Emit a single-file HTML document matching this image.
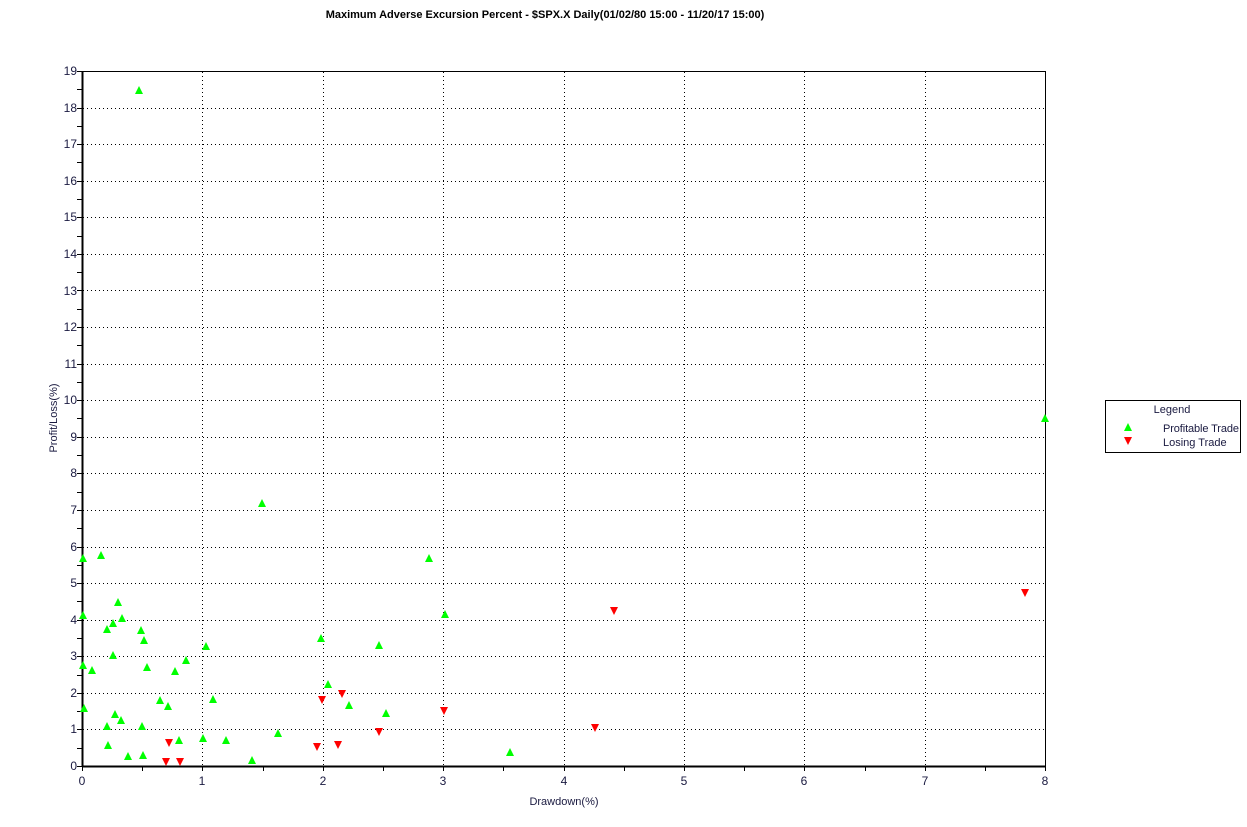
<!DOCTYPE html>
<html><head><meta charset="utf-8"><style>
html,body{margin:0;padding:0;background:#fff;width:1247px;height:827px;overflow:hidden}
svg text{font-family:"Liberation Sans",sans-serif;font-size:11px;fill:#1a1a40}
.n{font-size:12px}
</style></head><body>
<svg id="s" width="1247" height="827" xmlns="http://www.w3.org/2000/svg">
<text x="545" y="18" text-anchor="middle" style="font-weight:bold;font-size:11px;fill:#000">Maximum Adverse Excursion Percent - $SPX.X Daily(01/02/80 15:00 - 11/20/17 15:00)</text>
<g id="grid" stroke="#000" stroke-width="1" stroke-dasharray="1,3"></g>
<g id="ticks" stroke="#000" stroke-width="1"></g>
<rect x="82.5" y="71.5" width="963" height="695" fill="none" stroke="#000" stroke-width="1"/>
<line x1="82.5" y1="71" x2="82.5" y2="767" stroke="#000" stroke-width="2"/>
<line x1="82" y1="766.5" x2="1046" y2="766.5" stroke="#000" stroke-width="2"/>
<g text-anchor="end" class="n">
<text class="n" x="77" y="770">0</text><text class="n" x="77" y="733">1</text><text class="n" x="77" y="697">2</text><text class="n" x="77" y="660">3</text><text class="n" x="77" y="624">4</text><text class="n" x="77" y="587">5</text><text class="n" x="77" y="551">6</text><text class="n" x="77" y="514">7</text><text class="n" x="77" y="477">8</text><text class="n" x="77" y="441">9</text><text class="n" x="77" y="404">10</text><text class="n" x="77" y="368">11</text><text class="n" x="77" y="331">12</text><text class="n" x="77" y="295">13</text><text class="n" x="77" y="258">14</text><text class="n" x="77" y="221">15</text><text class="n" x="77" y="185">16</text><text class="n" x="77" y="148">17</text><text class="n" x="77" y="112">18</text><text class="n" x="77" y="75">19</text>
</g>
<g text-anchor="middle">
<text class="n" x="82" y="785">0</text><text class="n" x="202" y="785">1</text><text class="n" x="323" y="785">2</text><text class="n" x="443" y="785">3</text><text class="n" x="564" y="785">4</text><text class="n" x="684" y="785">5</text><text class="n" x="804" y="785">6</text><text class="n" x="925" y="785">7</text><text class="n" x="1045" y="785">8</text>
</g>
<text x="564" y="805" text-anchor="middle">Drawdown(%)</text>
<text x="57" y="418" text-anchor="middle" transform="rotate(-90 57 418)">Profit/Loss(%)</text>
<g id="pts"></g>
<rect x="1105.5" y="400.5" width="135" height="52" fill="#fff" stroke="#000"/>
<text x="1172" y="413" text-anchor="middle">Legend</text>
<polygon points="1124,431 1132,431 1128,423" fill="#00ff00"/>
<polygon points="1124,437 1132,437 1128,445" fill="#ff0000"/>
<text x="1163" y="432" textLength="76">Profitable Trade</text>
<text x="1163" y="446">Losing Trade</text>
</svg>
<script>
var NS="http://www.w3.org/2000/svg";
function el(p,t,a){var e=document.createElementNS(NS,t);for(var k in a)e.setAttribute(k,a[k]);p.appendChild(e);}
var g=document.getElementById('grid'),tk=document.getElementById('ticks'),P=document.getElementById('pts');
for(var v=1;v<19;v++){var y=Math.round(766-v*36.58)+.5;el(g,'line',{x1:83,y1:y,x2:1045,y2:y});}
for(var i=1;i<8;i++){var x=Math.round(82+120.4*i)+.5;el(g,'line',{x1:x,y1:72,x2:x,y2:766});}
for(var v=0;v<=38;v++){var y=Math.round(766-v*18.29)+.5;el(tk,'line',{x1:77,y1:y,x2:82,y2:y});}
for(var v=0;v<=16;v++){var x=Math.round(82+60.2*v)+.5;el(tk,'line',{x1:x,y1:766,x2:x,y2:771});}
var G=[[139,90],[262,503],[1045,418],[83,558],[101,555],[429,558],[83,615],[118,602],[107,629],[113,623],[122,618],[141,630],[144,640],[445,614],[206,646],[321,638],[113,655],[186,660],[147,667],[175,671],[83,665],[92,670],[379,645],[328,684],[84,708],[115,714],[160,700],[168,706],[213,699],[349,705],[386,713],[121,720],[107,726],[142,726],[278,733],[203,738],[179,740],[226,740],[108,745],[128,756],[143,755],[252,760],[510,752]];
var R=[[1025,593],[614,611],[322,700],[342,694],[444,711],[595,728],[379,732],[169,743],[317,747],[338,745],[166,762],[180,762]];
G.forEach(function(p){el(P,'polygon',{points:(p[0]-4)+','+(p[1]+4)+' '+(p[0]+4)+','+(p[1]+4)+' '+p[0]+','+(p[1]-4),fill:'#00ff00'});});
R.forEach(function(p){el(P,'polygon',{points:(p[0]-4)+','+(p[1]-4)+' '+(p[0]+4)+','+(p[1]-4)+' '+p[0]+','+(p[1]+4),fill:'#ff0000'});});
</script>
</body></html>
